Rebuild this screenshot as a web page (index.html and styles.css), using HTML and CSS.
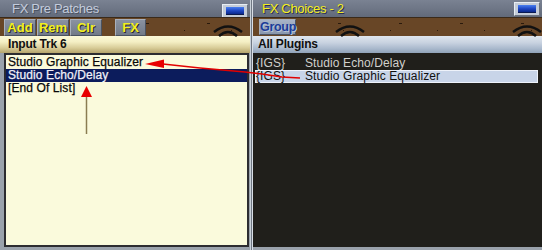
FILE: index.html
```html
<!DOCTYPE html>
<html>
<head>
<meta charset="utf-8">
<link rel="stylesheet" href="styles.css">
</head>
<body>
<div class="app">
  <section class="panel left">
    <div class="titlebar">
      <span class="title">FX Pre Patches</span>
      <span class="winbtn"><span class="winbtn-in"></span></span>
    </div>
    <div class="toolbar">
      <span class="tbtn">Add</span>
      <span class="tbtn">Rem</span>
      <span class="tbtn">Clr</span>
      <span class="tbtn fx">FX</span>
      <svg class="knot" width="34" height="18" viewBox="0 0 34 18"><path d="M3 13 Q17 2 31 13" fill="none" stroke="#111" stroke-width="2.5"/><path d="M8 17 Q17 9 26 17" fill="none" stroke="#111" stroke-width="2.5"/></svg>
    </div>
    <div class="header cream">Input Trk 6</div>
    <div class="listwrap">
      <div class="list light">
        <div class="row">Studio Graphic Equalizer</div>
        <div class="row sel">Studio Echo/Delay</div>
        <div class="row">[End Of List]</div>
      </div>
    </div>
  </section>
  <div class="divider"></div>
  <section class="panel right">
    <div class="titlebar">
      <span class="title yellow">FX Choices - 2</span>
      <span class="winbtn"><span class="winbtn-in"></span></span>
    </div>
    <div class="toolbar">
      <span class="tbtn group">Group</span>
      <svg class="knot k1" width="34" height="18" viewBox="0 0 34 18"><path d="M3 13 Q17 2 31 13" fill="none" stroke="#111" stroke-width="2.5"/><path d="M8 17 Q17 9 26 17" fill="none" stroke="#111" stroke-width="2.5"/></svg>
      <svg class="knot k2" width="34" height="18" viewBox="0 0 34 18"><path d="M3 13 Q17 2 31 13" fill="none" stroke="#111" stroke-width="2.5"/><path d="M8 17 Q17 9 26 17" fill="none" stroke="#111" stroke-width="2.5"/></svg>
    </div>
    <div class="header blue">All Plugins</div>
    <div class="listwrap dark">
      <div class="list darklist">
        <div class="prow"><span class="tag">{IGS}</span><span>Studio Echo/Delay</span></div>
        <div class="prow sel2"><span class="tag">{IGS}</span><span>Studio Graphic Equalizer</span></div>
      </div>
    </div>
  </section>
  <svg class="arrows" width="542" height="250" viewBox="0 0 542 250">
    <polyline points="300,78 282,77 262,74 245,72 200,68 163,64" fill="none" stroke="#e00000" stroke-width="1.5"/>
    <polygon points="145,64 164,59.5 164,68" fill="#e80000"/>
    <line x1="86.5" y1="96" x2="86.5" y2="134" stroke="#8a7c52" stroke-width="1.5"/>
    <polygon points="86.5,86 81,97 92,97" fill="#e80000"/>
  </svg>
</div>
</body>
</html>
```
FILE: styles.css
```css
html, body {
  margin: 0;
  padding: 0;
}
body {
  width: 542px;
  height: 250px;
  overflow: hidden;
  background: #8c96a4;
  font-family: "Liberation Sans", Arial, sans-serif;
}
.app {
  position: relative;
  display: flex;
  width: 542px;
  height: 250px;
}
.panel {
  display: flex;
  flex-direction: column;
  height: 250px;
}
.left { width: 250px; }
.right { flex: 1; }
.divider {
  width: 3px;
  background: linear-gradient(to right, #c8d0d8 0, #c8d0d8 1px, #707884 1px, #707884 2px, #d8dee6 2px);
}
.titlebar {
  height: 17px;
  display: flex;
  align-items: center;
  justify-content: space-between;
  background: linear-gradient(#7a8292, #6c7484 60%, #626a7a);
  padding: 0 2px 0 12px;
  box-sizing: border-box;
}
.right .titlebar { padding-left: 9px; }
.title {
  font-size: 13px;
  color: #c4ccdc;
  letter-spacing: -0.3px;
  text-shadow: 1px 1px 0 #4c5464;
}
.title.yellow {
  color: #f4f020;
  text-shadow: 1px 1px 0 #2a2e50;
}
.winbtn {
  width: 26px;
  height: 14px;
  box-sizing: border-box;
  background: #c4ccd8;
  border: 1px solid #e8eef4;
  border-right-color: #6c7480;
  border-bottom-color: #6c7480;
  padding: 2px 3px;
  display: flex;
}
.left .winbtn { margin-top: 4px; }
.winbtn-in {
  flex: 1;
  background: linear-gradient(#4a80f0, #1c44c0 55%, #0c2a8c);
  border-bottom: 1px solid #0a1a50;
}
.toolbar {
  position: relative;
  height: 19px;
  display: flex;
  align-items: center;
  gap: 1px;
  padding-left: 4px;
  box-sizing: border-box;
  background-color: #684626;
  background-image:
    linear-gradient(90deg, transparent 0 40%, #2a1a0c 40% 44%, transparent 44%),
    linear-gradient(90deg, transparent 0 70%, #2a1a0c 70% 73%, transparent 73%);
  background-size: 61px 1px, 47px 1px;
  background-repeat: repeat-x;
  background-position: 0 5px, 10px 12px;
  border-top: 1px solid #3a2a1a;
}
.tbtn {
  position: relative;
  z-index: 1;
  height: 17px;
  box-sizing: border-box;
  background: linear-gradient(#8a92a0, #727a88);
  border: 1px solid #a8b0bc;
  border-right-color: #4a5260;
  border-bottom-color: #4a5260;
  color: #f2f020;
  font-weight: bold;
  font-size: 13px;
  line-height: 15px;
  text-align: center;
  width: 32px;
  text-shadow: 1px 1px 0 #2a2a30;
}
.tbtn.fx { margin-left: 12px; width: 31px; }
.tbtn.group {
  width: 37px;
  margin-left: 2px;
  height: 16px;
  color: #1c3c98;
  text-shadow: 1px 1px 0 #b8c4d8;
  background: linear-gradient(#a8b4c8, #8896ac);
  font-size: 12.5px;
  letter-spacing: -0.3px;
}
.knot {
  position: absolute;
  left: 211px;
  top: 1px;
}
.knot.k1 { left: 80px; }
.knot.k2 { left: 257px; }
.header {
  height: 17px;
  box-sizing: border-box;
  font-weight: bold;
  font-size: 12px;
  line-height: 16px;
  padding-left: 8px;
  color: #101010;
  letter-spacing: -0.2px;
}
.header.cream {
  background: linear-gradient(#fbf8d8 0, #f4efc4 35%, #d8cc98 70%, #b4a46c 100%);
}
.header.blue {
  padding-left: 5px;
  background: linear-gradient(#dfe6ee 0, #c8d2e0 40%, #a8b8cc 75%, #90a2b8 100%);
}
.listwrap {
  flex: 1;
  padding: 0 1px 3px 4px;
  background: #9aa2ac;
  display: flex;
}
.listwrap.dark {
  padding: 0 0 3px 0;
}
.list {
  flex: 1;
  box-sizing: border-box;
}
.list.light {
  background: #fafadc;
  border: 2px solid #2c2c30;
  padding-top: 1px;
}
.row {
  height: 13px;
  line-height: 13px;
  font-size: 12px;
  padding-left: 2px;
  color: #080808;
  letter-spacing: 0.1px;
  -webkit-text-stroke: 0.25px #080808;
}
.row.sel {
  background: #0c1c5c;
  color: #f0f0f8;
  -webkit-text-stroke: 0.25px #f0f0f8;
}
.list.darklist {
  background: #201f1b;
  padding: 4px 4px 0 2px;
}
.prow {
  height: 13px;
  line-height: 13px;
  font-size: 12px;
  color: #d0d0cc;
  display: flex;
  letter-spacing: 0.1px;
}
.tag {
  width: 49px;
  padding-left: 1px;
}
.prow.sel2 {
  background: #c8d4e8;
  color: #101010;
  box-shadow: inset 0 0 0 1px #eef2fa;
}
.arrows {
  position: absolute;
  left: 0;
  top: 0;
  pointer-events: none;
}
```
